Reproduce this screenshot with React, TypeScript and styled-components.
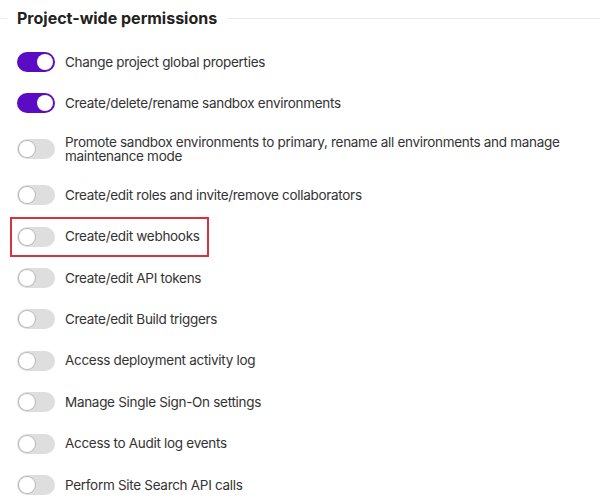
import React, { useState } from "react";
import { createGlobalStyle, styled } from "styled-components";

const GlobalStyle = createGlobalStyle`
  body {
    margin: 0;
    background: #ffffff;
    font-family: Inter, "Noto Sans", sans-serif;
  }
`;

const Page = styled.div`
  width: 600px;
  padding-top: 6px;
`;

const Header = styled.div`
  display: flex;
  align-items: center;
  height: 24px;
`;

const Line = styled.div<{ $grow?: boolean }>`
  height: 1px;
  background: #ececec;
  width: ${(p) => (p.$grow ? "auto" : "7px")};
  flex: ${(p) => (p.$grow ? 1 : "none")};
`;

const Title = styled.h2`
  margin: 0;
  padding: 0 10px;
  font-size: 16px;
  font-weight: 700;
  color: #222222;
  line-height: 24px;
`;

const List = styled.ul`
  list-style: none;
  margin: 0;
  padding: 22px 0 0 17px;
  display: flex;
  flex-direction: column;
  gap: 21.4px;
`;

const Row = styled.li<{ $highlight?: boolean }>`
  position: relative;
  display: flex;
  align-items: center;
  gap: 10px;
  width: fit-content;
  max-width: 560px;

  ${(p) =>
    p.$highlight &&
    `
    &::after {
      content: "";
      position: absolute;
      inset: -10px -9px -10px -7px;
      border: 2px solid #d8323f;
      pointer-events: none;
    }
  `}
`;

const Track = styled.button<{ $on: boolean }>`
  flex: none;
  position: relative;
  width: 38px;
  height: 20px;
  border: none;
  border-radius: 10px;
  padding: 0;
  cursor: pointer;
  background: ${(p) => (p.$on ? "#5b0bc4" : "#dedede")};
`;

const Knob = styled.span<{ $on: boolean }>`
  position: absolute;
  top: 2px;
  left: ${(p) => (p.$on ? "20px" : "2px")};
  width: 16px;
  height: 16px;
  border-radius: 50%;
  background: #ffffff;
  box-shadow: ${(p) => (p.$on ? "none" : "0 0 0 1px #b9b9b9")};
`;

const Label = styled.span`
  font-size: 13.5px;
  letter-spacing: -0.3px;
  line-height: 14.5px;
  color: #333333;
`;

const permissions = [
  { label: "Change project global properties", on: true },
  { label: "Create/delete/rename sandbox environments", on: true },
  {
    label:
      "Promote sandbox environments to primary, rename all environments and manage maintenance mode",
    on: false,
  },
  { label: "Create/edit roles and invite/remove collaborators", on: false },
  { label: "Create/edit webhooks", on: false, highlight: true },
  { label: "Create/edit API tokens", on: false },
  { label: "Create/edit Build triggers", on: false },
  { label: "Access deployment activity log", on: false },
  { label: "Manage Single Sign-On settings", on: false },
  { label: "Access to Audit log events", on: false },
  { label: "Perform Site Search API calls", on: false },
];

const App: React.FC = () => {
  const [values, setValues] = useState(permissions.map((p) => p.on));

  const toggle = (i: number) =>
    setValues((v) => v.map((x, j) => (j === i ? !x : x)));

  return (
    <>
      <GlobalStyle />
      <Page>
        <Header>
          <Line />
          <Title>Project-wide permissions</Title>
          <Line $grow />
        </Header>
        <List>
          {permissions.map((p, i) => (
            <Row key={p.label} $highlight={p.highlight}>
              <Track $on={values[i]} onClick={() => toggle(i)}>
                <Knob $on={values[i]} />
              </Track>
              <Label>{p.label}</Label>
            </Row>
          ))}
        </List>
      </Page>
    </>
  );
};

export default App;
